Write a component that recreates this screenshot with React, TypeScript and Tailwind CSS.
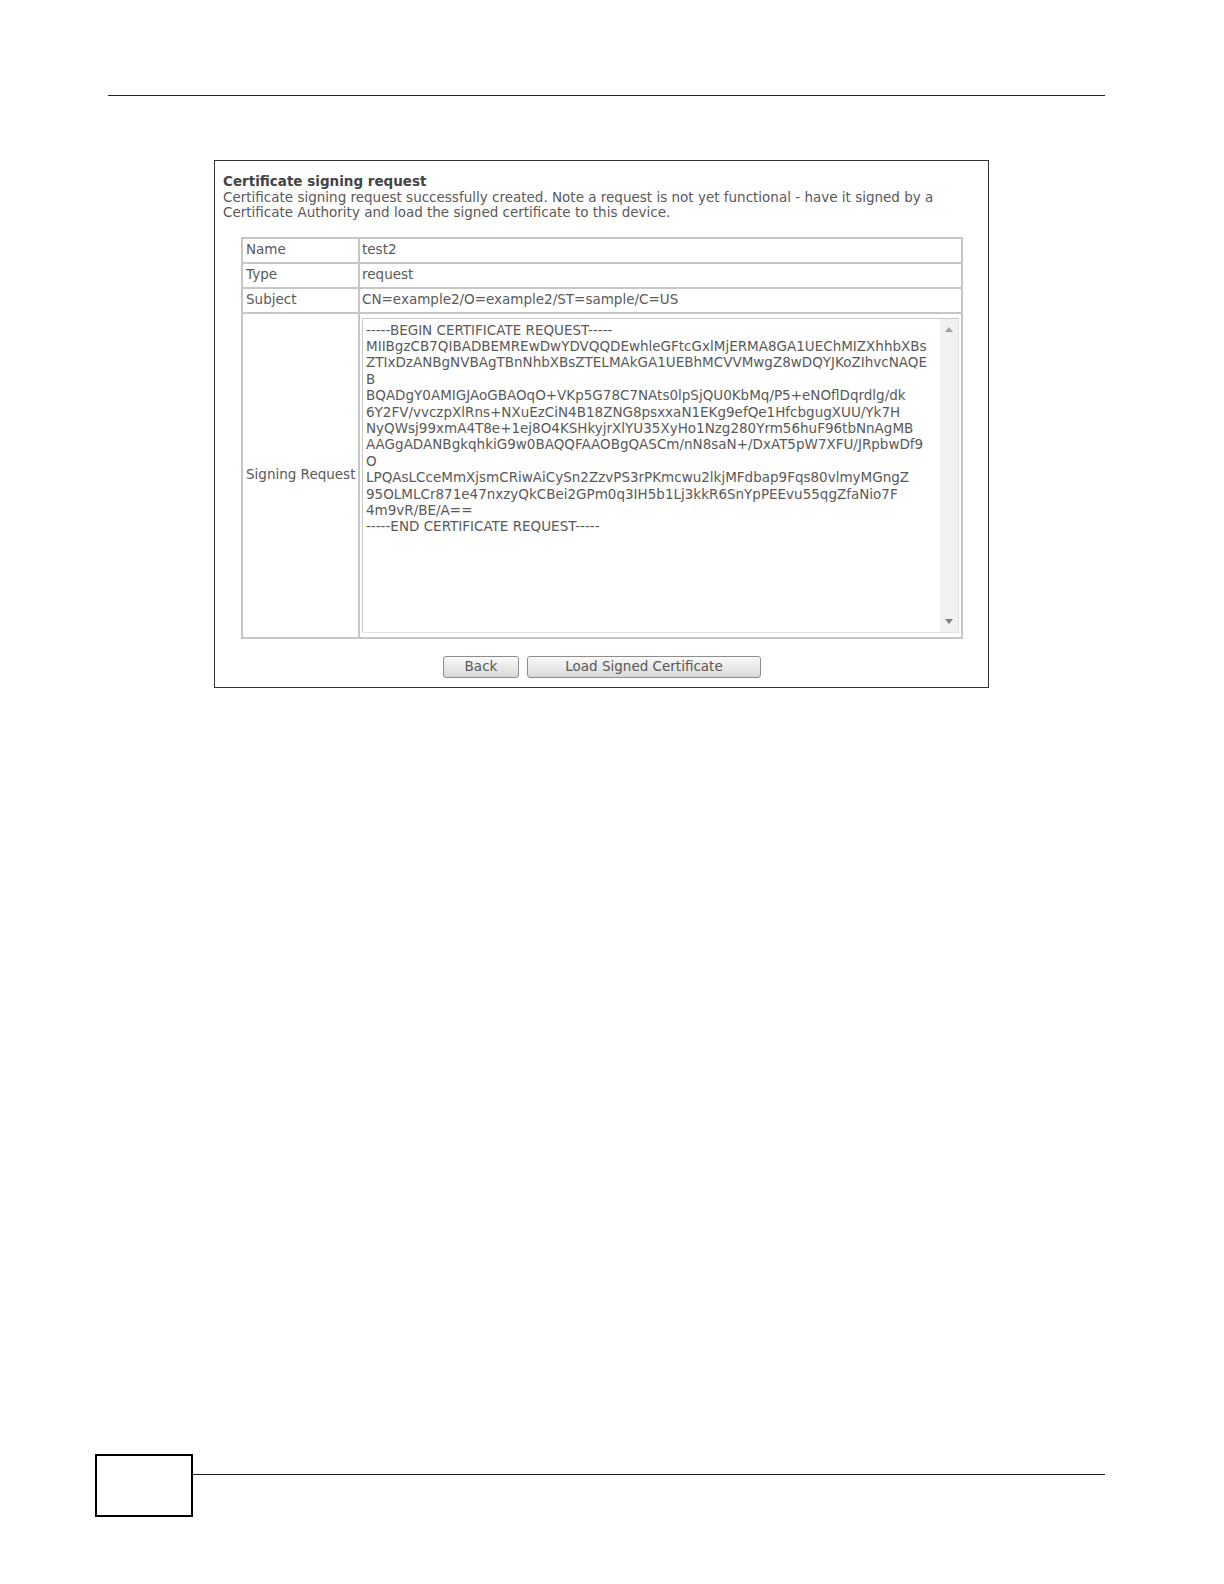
const csrLines = [
  "-----BEGIN CERTIFICATE REQUEST-----",
  "MIIBgzCB7QIBADBEMREwDwYDVQQDEwhleGFtcGxlMjERMA8GA1UEChMIZXhhbXBs",
  "ZTIxDzANBgNVBAgTBnNhbXBsZTELMAkGA1UEBhMCVVMwgZ8wDQYJKoZIhvcNAQE",
  "B",
  "BQADgY0AMIGJAoGBAOqO+VKp5G78C7NAts0lpSjQU0KbMq/P5+eNOflDqrdlg/dk",
  "6Y2FV/vvczpXlRns+NXuEzCiN4B18ZNG8psxxaN1EKg9efQe1HfcbgugXUU/Yk7H",
  "NyQWsj99xmA4T8e+1ej8O4KSHkyjrXlYU35XyHo1Nzg280Yrm56huF96tbNnAgMB",
  "AAGgADANBgkqhkiG9w0BAQQFAAOBgQASCm/nN8saN+/DxAT5pW7XFU/JRpbwDf9",
  "O",
  "LPQAsLCceMmXjsmCRiwAiCySn2ZzvPS3rPKmcwu2lkjMFdbap9Fqs80vlmyMGngZ",
  "95OLMLCr871e47nxzyQkCBei2GPm0q3IH5b1Lj3kkR6SnYpPEEvu55qgZfaNio7F",
  "4m9vR/BE/A==",
  "-----END CERTIFICATE REQUEST-----",
];

const rows = [
  { label: "Name", value: "test2" },
  { label: "Type", value: "request" },
  { label: "Subject", value: "CN=example2/O=example2/ST=sample/C=US" },
];

const font = { fontFamily: '"DejaVu Sans", Verdana, sans-serif' };

export default function App() {
  return (
    <div className="flex h-[1584px] w-[1224px] flex-col overflow-hidden bg-white" style={font}>
      {/* page header rule */}
      <div className="ml-[108px] mt-[95px] w-[997px] border-t border-[#222]" />

      {/* screenshot frame */}
      <div className="ml-[214px] mt-[64px] h-[528px] w-[775px] border border-[#333] pl-[8px] pt-[13px] text-[13.5px] leading-[15.5px] text-[#595959]">
        <div className="font-bold text-[#444]">Certificate signing request</div>
        <div>
          Certificate signing request successfully created. Note a request is not yet functional - have it signed by a
        </div>
        <div>Certificate Authority and load the signed certificate to this device.</div>

        <table className="ml-[18px] mt-[16px] w-[722px] border-collapse border-2 border-[#c6c6c6]">
          <tbody>
            {rows.map((r) => (
              <tr key={r.label} className="h-[25px]">
                <td className="w-[118px] whitespace-nowrap border-2 border-[#c6c6c6] pl-[3px] align-middle">{r.label}</td>
                <td className="border-2 border-[#c6c6c6] px-[2px] align-middle">{r.value}</td>
              </tr>
            ))}
            <tr className="h-[325px]">
              <td className="whitespace-nowrap border-2 border-[#c6c6c6] pl-[3px] align-middle">Signing Request</td>
              <td className="border-2 border-[#c6c6c6] px-[2px] py-[3px]">
                <div className="flex h-[315px] w-[597px] border border-[#c8c8c8] border-b-[#e4e4e4] border-r-[#e4e4e4]">
                  <div className="flex-1 whitespace-pre pl-[3px] pt-[3px] text-[13.5px] leading-[16.4px] text-[#595959]">
                    {csrLines.join("\n")}
                  </div>
                  <div className="flex w-[18px] flex-col items-center justify-between bg-[#f1f1f1] py-[8px]">
                    <svg width="8" height="5" viewBox="0 0 8 5">
                      <path d="M0 5 L4 0 L8 5 Z" fill="#a0a0a0" />
                    </svg>
                    <svg width="8" height="5" viewBox="0 0 8 5">
                      <path d="M0 0 L8 0 L4 5 Z" fill="#808080" />
                    </svg>
                  </div>
                </div>
              </td>
            </tr>
          </tbody>
        </table>

        <div className="ml-[18px] mt-[17px] flex w-[722px] justify-center gap-[8px]">
          <button className="h-[22px] w-[76px] rounded-[3px] border border-[#8e8e8e] bg-gradient-to-b from-[#fafafa] to-[#d8d8d8] text-[13.5px] text-[#595959]">
            Back
          </button>
          <button className="h-[22px] w-[234px] rounded-[3px] border border-[#8e8e8e] bg-gradient-to-b from-[#fafafa] to-[#d8d8d8] text-[13.5px] text-[#595959]">
            Load Signed Certificate
          </button>
        </div>
      </div>

      {/* footer */}
      <div className="mb-[67px] mt-auto flex items-start">
        <div className="ml-[95px] h-[63px] w-[98px] border-2 border-black" />
        <div className="mr-[119px] mt-[20px] flex-1 border-t border-[#222]" />
      </div>
    </div>
  );
}
